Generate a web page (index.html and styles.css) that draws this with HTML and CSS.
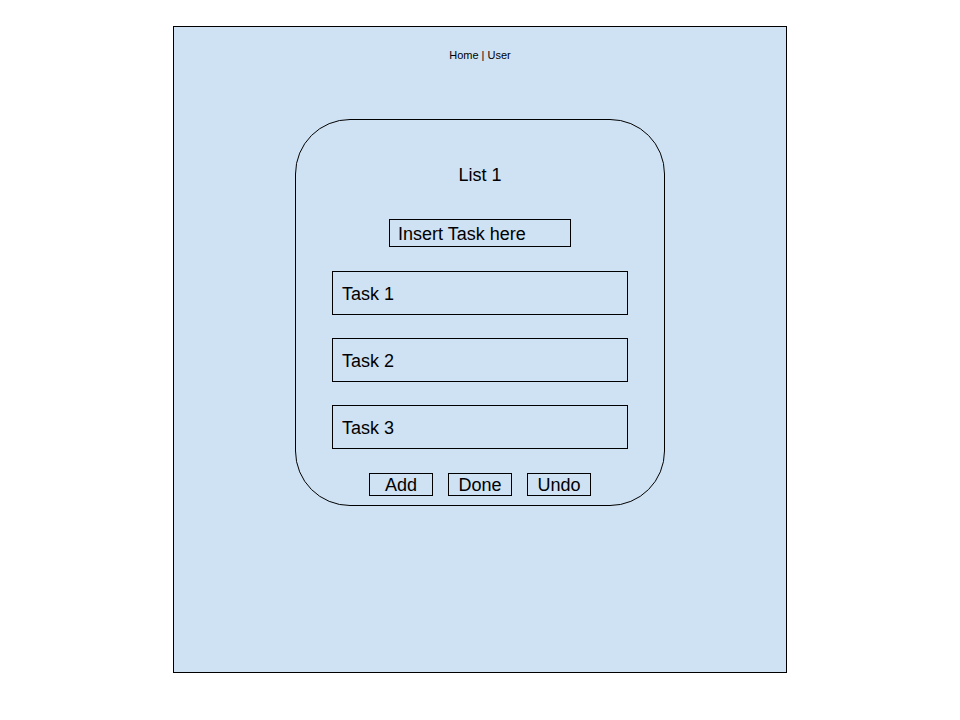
FILE: index.html
```html
<!DOCTYPE html>
<html lang="en">
<head>
    <meta charset="UTF-8">
    <meta name="viewport" content="width=device-width, initial-scale=1.0">
    <title>To-Do List</title>
    <link rel="stylesheet" href="styles.css">
</head>
<body>
    <div class="frame">
        <nav class="top-nav">Home | User</nav>

        <section class="list-card">
            <h2 class="list-title">List 1</h2>
            <input class="task-input" type="text" value="Insert Task here">

            <ul class="task-list">
                <li class="task-item">Task 1</li>
                <li class="task-item">Task 2</li>
                <li class="task-item">Task 3</li>
            </ul>

            <div class="button-row">
                <button class="action-btn">Add</button>
                <button class="action-btn">Done</button>
                <button class="action-btn">Undo</button>
            </div>
        </section>
    </div>
</body>
</html>
```

FILE: styles.css
```css
body {
    margin: 0;
    background-color: #fff;
    font-family: 'Liberation Sans', Arial, sans-serif;
    color: #000;
}
.frame {
    margin: 26px 0 0 173px;
    width: 614px;
    height: 647px;
    box-sizing: border-box;
    border: 1px solid #000;
    background-color: #cfe2f3;
    display: flex;
    flex-direction: column;
    align-items: center;
}
.top-nav {
    margin-top: 22px;
    font-size: 11px;
    line-height: 13px;
}
.list-card {
    margin-top: 57px;
    width: 370px;
    height: 387px;
    box-sizing: border-box;
    border: 1px solid #000;
    border-radius: 55px;
    display: flex;
    flex-direction: column;
    align-items: center;
    padding-top: 45px;
}
.list-title {
    margin: 0;
    font-size: 18px;
    font-weight: normal;
    line-height: 21px;
}
.task-input {
    margin-top: 33px;
    width: 182px;
    height: 28px;
    box-sizing: border-box;
    border: 1px solid #000;
    border-radius: 0;
    background: transparent;
    padding: 2px 8px 0;
    font-family: inherit;
    font-size: 18px;
    color: #000;
    outline: none;
}
.task-list {
    list-style: none;
    margin: 24px 0 0;
    padding: 0;
    display: flex;
    flex-direction: column;
    gap: 23px;
}
.task-item {
    width: 296px;
    height: 44px;
    box-sizing: border-box;
    border: 1px solid #000;
    padding: 2px 0 0 9px;
    display: flex;
    align-items: center;
    font-size: 18px;
}
.button-row {
    margin-top: 24px;
    display: flex;
    gap: 15px;
}
.action-btn {
    width: 64px;
    height: 23px;
    box-sizing: border-box;
    border: 1px solid #000;
    border-radius: 0;
    background: transparent;
    padding: 1px 0 0;
    font-family: inherit;
    font-size: 18px;
    line-height: 20px;
    color: #000;
}
```
